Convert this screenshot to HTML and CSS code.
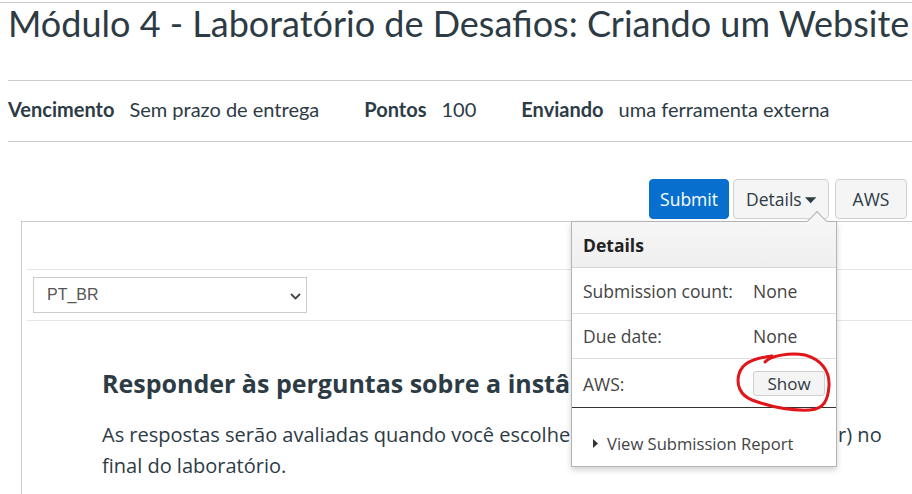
FILE: index.html
```html
<!DOCTYPE html>
<html lang="pt-BR">
<head>
<meta charset="utf-8">
<title>Módulo 4 - Laboratório de Desafios</title>
<link rel="stylesheet" href="styles.css">
</head>
<body>
<div class="page">
  <div class="topline"></div>
  <h1 class="title">Módulo 4 - Laboratório de Desafios: Criando um Website</h1>
  <hr class="rule rule-a">
  <div class="meta">
    <div class="meta-item"><span class="meta-label">Vencimento</span><span class="meta-value">Sem prazo de entrega</span></div>
    <div class="meta-item"><span class="meta-label">Pontos</span><span class="meta-value">100</span></div>
    <div class="meta-item"><span class="meta-label">Enviando</span><span class="meta-value">uma ferramenta externa</span></div>
  </div>
  <hr class="rule rule-b">

  <div class="toolbar">
    <button class="btn btn-primary">Submit</button>
    <button class="btn btn-details">Details<svg class="caret" width="12" height="7" viewBox="0 0 12 7"><path d="M0 0H12L6 6.5Z" fill="#2d3b45"/></svg></button>
    <button class="btn btn-aws">AWS</button>
  </div>

  <div class="frame">
    <div class="frame-top"></div>
    <div class="lang-row">
      <div class="select">
        <span class="select-text">PT_BR</span>
        <svg class="chevron" width="11" height="7" viewBox="0 0 11 7"><path d="M1 1L5.5 5.5L10 1" fill="none" stroke="#444" stroke-width="1.8"/></svg>
      </div>
    </div>
    <div class="lab">
      <h2 class="lab-title">Responder às perguntas sobre a instância do servidor web</h2>
      <p class="lab-text">As respostas serão avaliadas quando você escolher a opção Submit (ou Finalizar) no final do laboratório.</p>
    </div>
  </div>
</div>

<div class="popover">
  <div class="popover-arrow"></div>
  <div class="pop-head">Details</div>
  <div class="pop-row r1"><span class="pop-label">Submission count:</span><span class="pop-value">None</span></div>
  <div class="pop-row r2"><span class="pop-label">Due date:</span><span class="pop-value">None</span></div>
  <div class="pop-row r3"><span class="pop-label">AWS:</span><span class="pop-value"><button class="btn-show">Show</button></span></div>
  <div class="pop-foot"><svg class="tri" width="5" height="9" viewBox="0 0 5 9"><path d="M0 0L5 4.5L0 9Z" fill="#333"/></svg><span>View Submission Report</span></div>
</div>

<svg class="scribble" width="912" height="494" viewBox="0 0 912 494">
  <path d="M765 362 C 770 356, 790 352, 805 355 C 820 359, 830 370, 829 386 C 828 400, 824 409, 810 410 C 790 411, 768 406, 752 400 C 740 395, 736 385, 739 374 C 742 364, 750 359, 772 356"
        fill="none" stroke="#e0161b" stroke-width="3" stroke-linecap="round" stroke-linejoin="round"/>
</svg>
</body>
</html>
```

FILE: styles.css
```css
* { box-sizing: border-box; }
html, body { margin: 0; padding: 0; background: #fff; overflow: hidden; }
body {
  width: 912px;
  height: 494px;
  position: relative;
  font-family: "Open Sans", "Noto Sans", sans-serif;
  color: #2d3b45;
}
.page { padding: 0 0 0 8px; width: 1100px; }
.topline { height: 3px; border-bottom: 1px solid #c7cdd1; margin-left: -8px; }
.title {
  font-family: Lato, "Liberation Sans", sans-serif;
  font-weight: 400;
  font-size: 36px;
  line-height: 40px;
  margin: 0;
  color: #2d3b45;
  white-space: nowrap;
}
.rule { border: 0; border-top: 1px solid #c7cdd1; margin: 0; }
.rule-a { margin-top: 37px; }
.rule-b { margin-top: 19px; }
.meta {
  display: flex;
  margin-top: 16px;
  font-family: Lato, "Liberation Sans", sans-serif;
  font-size: 20px;
  line-height: 24px;
  color: #2d3b45;
  white-space: nowrap;
}
.meta-item { display: flex; margin-right: 45px; }
.meta-label { font-weight: 700; margin-right: 15px; }
.rule-b { margin-top: 20px; }

.toolbar {
  display: flex;
  width: 899px;
  justify-content: flex-end;
  margin-top: 37px;
  height: 40px;
}
.btn {
  font-family: "Open Sans", "Noto Sans", sans-serif;
  font-size: 17.5px;
  height: 40px;
  border-radius: 4px;
  border: 1px solid #d0d0d0;
  background: #f5f5f5;
  color: #2d3b45;
  padding: 0 12px;
  display: flex;
  align-items: center;
}
.btn-primary { background: #0770cf; border-color: #0770cf; color: #fff; width: 80px; justify-content: center; margin-right: 4px; }
.btn-details { width: 96px; justify-content: center; margin-right: 6px; }
.caret { margin-left: 3px; margin-top: 2px; }
.btn-aws { width: 72px; justify-content: center; }

.frame {
  margin-top: 2px;
  margin-left: 13px;
  border-left: 1px solid #c7cdd1;
  border-top: 1px solid #c7cdd1;
  padding-left: 5px;
  height: 400px;
}
.frame-top { height: 47px; }
.lang-row {
  border-top: 1px solid #e6e6e6;
  border-bottom: 1px solid #e6e6e6;
  padding: 7px 6px 7px;
}
.select {
  width: 274px;
  height: 36px;
  border: 1px solid #cccccc;
  display: flex;
  align-items: center;
  justify-content: space-between;
  padding: 0 5px 0 13px;
  font-family: "Liberation Sans", Arial, sans-serif;
  font-size: 16px;
  color: #555;
}
.chevron { margin-top: 2px; }
.lab { padding: 46px 0 0 75px; }
.lab-title {
  font-family: "Open Sans", "Noto Sans", sans-serif;
  font-weight: 700;
  font-size: 25px;
  line-height: 32px;
  margin: 0;
  color: #2d3b45;
  white-space: nowrap;
}
.lab-text {
  font-size: 20px;
  line-height: 31px;
  margin: 20px 0 0;
  width: 790px;
  color: #2d3b45;
}

.popover {
  position: absolute;
  left: 571px;
  top: 221px;
  width: 266px;
  background: #fff;
  border: 1px solid #b5b5b5;
  box-shadow: 0 3px 6px rgba(0,0,0,0.18);
  font-family: "Open Sans", "Noto Sans", sans-serif;
  font-size: 17.5px;
  color: #444;
}
.popover-arrow {
  position: absolute;
  top: -8px;
  left: 238px;
  width: 14px;
  height: 14px;
  background: #f6f6f6;
  border-left: 1px solid #b5b5b5;
  border-top: 1px solid #b5b5b5;
  transform: rotate(45deg);
}
.pop-head {
  position: relative;
  height: 46px;
  display: flex;
  align-items: center;
  padding-left: 11px;
  padding-top: 1px;
  background: linear-gradient(#f6f6f6, #efefef);
  border-bottom: 1px solid #d6d6d6;
  font-weight: 700;
  color: #222;
}
.pop-row {
  display: grid;
  grid-template-columns: 170px auto;
  align-items: center;
  padding-left: 11px;
  border-bottom: 1px solid #dedede;
}
.r1 { height: 46px; }
.r2 { height: 45px; }
.r3 { height: 49px; border-bottom: 1px solid #333; padding-top: 1px; }
.btn-show {
  font-family: "Open Sans", "Noto Sans", sans-serif;
  font-size: 17px;
  width: 72px;
  height: 25px;
  padding: 0;
  border: 1px solid #cfcfcf;
  border-radius: 3px;
  background: #f4f4f4;
  color: #2d3b45;
  line-height: 22px;
  margin-top: -8px;
}
.pop-foot {
  height: 58px;
  display: flex;
  align-items: center;
  padding: 13px 0 0 21px;
  font-size: 16.6px;
  color: #444;
}
.tri { margin-right: 9px; }
.scribble { position: absolute; left: 0; top: 0; pointer-events: none; }
```
